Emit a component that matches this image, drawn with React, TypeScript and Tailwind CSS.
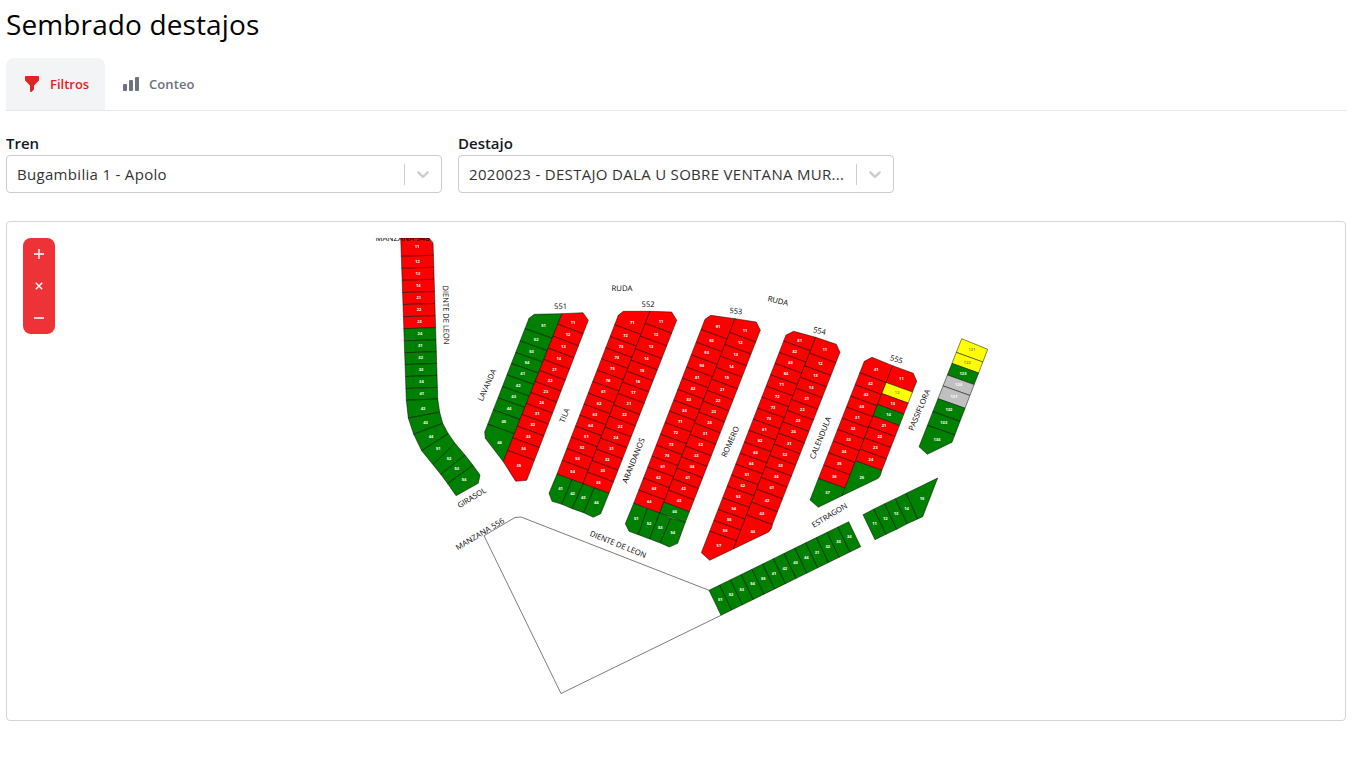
import React from "react";

type Pt = [number, number];
type Fill = "red" | "green" | "yellow" | "silver";
type Lot = { pts: Pt[]; fill: Fill; label: string; at?: Pt };

const R: Fill = "red";
const G: Fill = "green";
const Y: Fill = "yellow";
const S: Fill = "silver";

const xAt = ([a, b]: [Pt, Pt], y: number) =>
  a[0] + ((b[0] - a[0]) * (y - a[1])) / (b[1] - a[1]);

type Strip = {
  left: [Pt, Pt];
  right: [Pt, Pt];
  top: Pt[];
  bottom: Pt[];
  cuts: number[];
  labels: string;
  fills: (i: number) => Fill;
  drop?: number;
};

// Slices a slanted column of lots at the given heights; `top` runs left to right, `bottom` right to left.
function slice({ left, right, top, bottom, cuts, labels, fills, drop = 4.8 }: Strip): Lot[] {
  const names = labels.split(" ");
  const l = (c: number): Pt => [xAt(left, c - drop), c - drop];
  const r = (c: number): Pt => [xAt(right, c + drop), c + drop];
  return names.map((label, i) => {
    const head: Pt[] = i === 0 ? top : [l(cuts[i - 1]), r(cuts[i - 1])];
    const tail: Pt[] = i === names.length - 1 ? bottom : [r(cuts[i]), l(cuts[i])];
    return { pts: [...head, ...tail], fill: fills(i), label };
  });
}

// Builds lots between consecutive pairs of edge points.
function ladder(rungs: [Pt, Pt][], labels: string, fills: (i: number) => Fill): Lot[] {
  return labels.split(" ").map((label, i) => ({
    pts: [rungs[i][0], rungs[i][1], rungs[i + 1][1], rungs[i + 1][0]],
    fill: fills(i),
    label,
  }));
}

const westY = [256.3, 268.3, 280.3, 292.5, 304.5, 316.7, 328.7, 340.8, 352.7, 364.5, 376.5, 388.5];
const westRungs: [Pt, Pt][] = westY.map((y) => [
  [400.7 + (y - 238) * 0.0345, y],
  [433 + (y - 242) * 0.03, y - 1],
]);

const west: Lot[] = [
  {
    pts: [[400.7, 238], [429, 238], [433, 242.7], westRungs[0][1], westRungs[0][0]],
    fill: R,
    label: "11",
    at: [417, 246.9],
  },
  ...ladder(
    [
      ...westRungs,
      [[406.3, 400.3], [437.7, 399]],
      [[408.3, 418], [439.7, 412.3]],
      [[413.7, 434.3], [442.7, 423.3]],
      [[421.7, 450.7], [448.3, 433.7]],
      [[433, 464.7], [455, 443.3]],
      [[440.7, 474.3], [465, 455]],
      [[447.7, 483.7], [473, 465.3]],
    ],
    "12 13 14 21 22 23 24 31 32 33 34 41 42 43 44 51 52 53",
    (i) => (i < 6 ? R : G)
  ),
  { pts: [[447.7, 483.7], [473, 465.3], [480, 475], [478.3, 483.3], [456, 495.7]], fill: G, label: "54", at: [464, 479.5] },
];

const b551: Lot[] = [
  ...slice({
    left: [[529, 318.3], [484.7, 432]],
    right: [[562, 313.7], [503.3, 461.7]],
    top: [[529, 318.3], [534.3, 314.3], [562, 313.7]],
    bottom: [[503.3, 461.7], [485.3, 438.3], [484.7, 432]],
    cuts: [333.5, 345.8, 357.3, 368.3, 379.7, 391.3, 402.7, 414.7, 429],
    labels: "51 52 53 54 41 42 43 44 45 46",
    fills: () => G,
  }),
  ...slice({
    left: [[562, 313.7], [503.3, 461.7]],
    right: [[588.3, 320.3], [526.7, 480.3]],
    top: [[562, 313.7], [583, 312.7], [588.3, 320.3]],
    bottom: [[526.7, 480.3], [515.7, 481.3], [503.3, 461.7]],
    cuts: [329, 341, 353, 364.3, 375.3, 386.3, 397.3, 408.3, 419.3, 431, 442.7, 455.3],
    labels: "11 12 13 14 21 22 23 24 31 32 33 34 35",
    fills: () => R,
  }),
];

const b552: Lot[] = [
  ...slice({
    left: [[618.3, 315.3], [557, 474]],
    right: [[650, 311.3], [583, 483.7]],
    top: [[618.3, 315.3], [623.3, 311.3], [650, 311.3]],
    bottom: [[583, 483.7], [557, 474]],
    cuts: [329.7, 341.3, 352.7, 363.7, 375, 386.3, 398, 409, 420, 431, 442, 453.3, 465.3],
    labels: "71 72 73 74 75 76 61 62 63 64 51 52 53 54",
    fills: () => R,
  }),
  ...slice({
    left: [[650, 311.3], [583, 483.7]],
    right: [[676.7, 320.3], [609, 493.3]],
    top: [[650, 311.3], [671.7, 312], [676.7, 320.3]],
    bottom: [[609, 493.3], [583, 483.7]],
    cuts: [328.3, 341, 353.7, 365, 376, 387, 398.3, 409.7, 421, 432, 443, 454, 465.3, 477],
    labels: "11 12 13 14 15 16 17 21 22 23 24 31 32 33 34",
    fills: () => R,
  }),
  { pts: [[557, 474], [572, 479.7], [562, 504.3], [552, 501.3], [549, 493.3]], fill: G, label: "41" },
  { pts: [[572, 479.7], [583, 483.7], [572.3, 508.7], [562, 504.3]], fill: G, label: "42" },
  { pts: [[583, 483.7], [594.3, 488], [583.7, 512.7], [572.3, 508.7]], fill: G, label: "43" },
  { pts: [[594.3, 488], [609, 493.3], [600.7, 513.7], [593.3, 517.3], [583.7, 512.7]], fill: G, label: "44" },
];

const b553: Lot[] = [
  ...slice({
    left: [[705, 319.3], [633.7, 503.3]],
    right: [[735, 318.7], [659.7, 513]],
    top: [[705, 319.3], [710.7, 315.3], [735, 318.7]],
    bottom: [[659.7, 513], [633.7, 503.3]],
    cuts: [334.3, 347, 359.7, 372, 383, 394.3, 405, 416, 427.3, 439, 450, 461, 472, 483, 495],
    labels: "91 92 93 94 81 82 83 84 71 72 73 74 61 62 63 64",
    fills: () => R,
  }),
  ...slice({
    left: [[735, 318.7], [659.7, 513]],
    right: [[760.3, 330.3], [685.3, 522.3]],
    top: [[735, 318.7], [756.3, 322], [760.3, 330.3]],
    bottom: [[685.3, 522.3], [659.7, 513]],
    cuts: [337.3, 349.3, 361, 372.3, 384, 395.3, 406, 417, 428, 439.3, 451, 461.7, 473, 483.7, 495, 507],
    labels: "11 12 13 14 15 21 22 23 24 31 32 33 34 41 42 43 44",
    fills: (i) => (i === 16 ? G : R),
  }),
  { pts: [[633.7, 503.3], [647.3, 508.7], [638.3, 534.7], [629, 531.3], [625.3, 523.7]], fill: G, label: "51" },
  { pts: [[647.3, 508.7], [659.7, 513], [649.7, 539], [638.3, 534.7]], fill: G, label: "52" },
  { pts: [[659.7, 513], [671, 518], [660.3, 543], [649.7, 539]], fill: G, label: "53" },
  { pts: [[671, 518], [685.3, 522.3], [677.7, 543.3], [669.3, 547], [660.3, 543]], fill: G, label: "54" },
];

const b554: Lot[] = [
  ...slice({
    left: [[786, 335], [701.3, 552.7]],
    right: [[815.7, 337.3], [733.3, 549]],
    top: [[786, 335], [793.7, 331.3], [815.7, 337.3]],
    bottom: [[733.3, 549], [709.7, 560.3], [701.3, 552.7]],
    cuts: [346, 357.3, 368.3, 379.7, 391, 402, 413, 424, 435.3, 447, 458, 469, 480, 491, 502.7, 514.3, 525.3, 536],
    labels: "81 82 83 84 71 72 73 74 61 62 63 64 51 52 53 54 55 56 57",
    fills: () => R,
  }),
  ...slice({
    left: [[815.7, 337.3], [733.3, 549]],
    right: [[840, 352.3], [772, 525.5]],
    top: [[815.7, 337.3], [836.3, 344.3], [840, 352.3]],
    bottom: [[771.7, 528], [768.7, 532], [733.3, 549]],
    cuts: [358, 370.7, 382, 393, 404.3, 415.3, 426.7, 438, 449, 460.3, 471.3, 482.3, 494, 507, 519.8],
    labels: "11 12 13 14 21 22 23 24 31 32 33 34 41 42 43 44",
    fills: () => R,
  }),
];

const b555: Lot[] = [
  ...slice({
    left: [[864.3, 361.3], [810, 500]],
    right: [[892.7, 365.7], [842, 495.7]],
    top: [[864.3, 361.3], [872, 357.3], [892.7, 365.7]],
    bottom: [[842, 495.7], [818.3, 507.3], [810, 500]],
    cuts: [377.7, 389.7, 401, 412, 423, 434.3, 446, 457.7, 470, 483.3],
    labels: "41 42 43 44 31 32 33 34 35 36 37",
    fills: (i) => (i === 10 ? G : R),
  }),
  ...slice({
    left: [[892.7, 365.7], [842, 495.7]],
    right: [[916.7, 381.3], [881.7, 470.7]],
    top: [[892.7, 365.7], [913.3, 373.3], [916.7, 381.3]],
    bottom: [[880.3, 475.5], [878.3, 478.3], [842, 495.7]],
    cuts: [387.3, 398.3, 409.3, 420.7, 431.7, 442.7, 454, 465.7],
    labels: "11 12 13 14 21 22 23 24 25",
    fills: (i) => (i === 1 ? Y : i === 3 || i === 8 ? G : R),
  }),
];

const east: Lot[] = slice({
  left: [[961.7, 338.7], [919, 446.7]],
  right: [[987.7, 349.3], [952, 442.3]],
  top: [[961.7, 338.7], [987.7, 349.3]],
  bottom: [[952, 442.3], [927.3, 454.3], [919, 446.7]],
  cuts: [357.2, 368.2, 379.8, 390.7, 403.5, 416.5, 430.2],
  labels: "121 122 123 124 131 132 133 134",
  fills: (i) => (i < 2 ? Y : i === 3 || i === 4 ? S : G),
});

const southRungs = Array.from({ length: 14 }, (_, i): [Pt, Pt] => [
  [709 + (139.7 * i) / 13, 590.3 - (68.6 * i) / 13],
  [721 + (139.7 * i) / 13, 615.3 - (68.6 * i) / 13],
]);
const south: Lot[] = [
  ...ladder(southRungs, "51 52 53 54 55 41 42 43 44 31 32 33 34", () => G),
  ...ladder(
    [
      [[863, 514.7], [875, 539.7]],
      [[874, 509], [886, 534.3]],
      [[884.7, 503.7], [896.7, 529.3]],
      [[895.3, 498.7], [907.3, 523.7]],
      [[906.3, 493.3], [917.7, 519]],
    ],
    "11 12 13 14",
    () => G
  ),
  { pts: [[906.3, 493.3], [937.7, 478], [922.7, 516.7], [917.7, 519]], fill: G, label: "15" },
];

const lots = [...west, ...b551, ...b552, ...b553, ...b554, ...b555, ...east, ...south];

// Middle of the lot's bounding box.
function center(pts: Pt[]): Pt {
  const xs = pts.map((p) => p[0]);
  const ys = pts.map((p) => p[1]);
  return [
    (Math.min(...xs) + Math.max(...xs)) / 2,
    (Math.min(...ys) + Math.max(...ys)) / 2,
  ];
}

// text, centre x, centre y, rotation, length
const streets: [string, number, number, number, number][] = [
  ["MANZANA 548", 402.5, 238, 0, 54],
  ["DIENTE DE LEON", 446, 315, 89, 59],
  ["GIRASOL", 471.7, 497.7, -31, 32],
  ["MANZANA 556", 480, 534, -31, 55],
  ["LAVANDA", 487, 385, -66, 34],
  ["551", 560.5, 306.2, 0, 12.8],
  ["TILA", 564.5, 415.5, -68, 14.5],
  ["RUDA", 622, 288, 0, 21],
  ["552", 648, 304, 0, 12.8],
  ["ARANDANOS", 633.5, 460.5, -68, 48],
  ["553", 736, 311, 6, 12.8],
  ["RUDA", 778, 300.8, 13, 21],
  ["ROMERO", 730.3, 441.7, -66, 33],
  ["554", 819.5, 330.8, 12, 12.8],
  ["CALENDULA", 820.5, 437.8, -68, 45],
  ["555", 896.5, 359.3, 17, 12.8],
  ["PASSIFLORA", 919.3, 410, -67, 44],
  ["ESTRAGON", 829.5, 515.3, -31, 40],
  ["DIENTE DE LEON", 618, 544.3, 22, 60],
];

function SiteMap() {
  return (
    <svg
      className="block h-[466px] w-[1306px] font-['Open_Sans','Noto_Sans',sans-serif]"
      viewBox="23 238 1306 466"
      textRendering="geometricPrecision"
    >
      <path
        d="M709 590.3 L521 517 L515 517.5 L484 535.7 L561 693.5 L721 615.3"
        fill="none"
        stroke="#000"
        strokeOpacity="0.55"
        strokeWidth="0.95"
      />
      {lots.map(({ pts, fill }, i) => (
        <polygon
          key={i}
          points={pts.map((p) => p.join(",")).join(" ")}
          fill={fill}
          stroke="#000"
          strokeOpacity="0.75"
          strokeWidth="0.65"
          strokeLinejoin="round"
        />
      ))}
      {lots.map(({ pts, at, fill, label }, i) => {
        const [x, y] = at ?? center(pts);
        return (
          <text
            key={i}
            x={x}
            y={y + 1.1}
            fontSize="4.1"
            fontWeight={fill === Y ? 400 : 700}
            fill={fill === Y ? "#333" : "#fff"}
            textAnchor="middle"
          >
            {label}
          </text>
        );
      })}
      {streets.map(([text, x, y, turn, length], i) => (
        <text
          key={i}
          transform={`translate(${x} ${y}) rotate(${turn})`}
          y="2.7"
          fontSize="7.7"
          fill="#000"
          textAnchor="middle"
          textLength={length}
          lengthAdjust="spacingAndGlyphs"
        >
          {text}
        </text>
      ))}
    </svg>
  );
}

function Select({ label, value }: { label: string; value: string }) {
  return (
    <div className="w-[436px]">
      <div className="flex h-6 items-center text-[15px] font-semibold text-[#111827]">
        {label}
      </div>
      <div className="flex h-[38px] items-center rounded border border-[#cccccc] bg-white">
        <div className="min-w-0 flex-1 whitespace-nowrap pl-2.5 text-[15px] tracking-[0.31px] text-[#333333]">{value}</div>
        <div className="h-[21px] w-px bg-[#cccccc]" />
        <div className="p-2 text-[#cccccc]">
          <svg className="h-5 w-5" viewBox="0 0 20 20" fill="currentColor">
            <path d="M4.516 7.548c0.436-0.446 1.043-0.481 1.576 0l3.908 3.747 3.908-3.747c0.533-0.481 1.141-0.446 1.574 0 0.436 0.445 0.408 1.197 0 1.615-0.406 0.418-4.695 4.502-4.695 4.502-0.217 0.223-0.502 0.335-0.787 0.335s-0.57-0.112-0.789-0.335c0 0-4.287-4.084-4.695-4.502s-0.436-1.17 0-1.615z" />
          </svg>
        </div>
      </div>
    </div>
  );
}

export default function App() {
  return (
    <main className="h-[776px] overflow-hidden bg-white px-1.5 font-['Open_Sans','Noto_Sans',sans-serif] text-black">
      <h1 className="pt-1 pb-0.5 text-[28px] leading-[40px] tracking-[0.12px]">Sembrado destajos</h1>

      <nav className="mt-3 mr-[3px] flex h-[53px] border-b border-gray-200 text-[13px] font-semibold">
        <button className="flex h-[52px] w-[99px] items-center rounded-t-lg bg-gray-100 pl-4 text-[#e02424]">
          <svg className="mr-2 h-5 w-5" viewBox="0 0 20 20" fill="currentColor">
            <path
              fillRule="evenodd"
              clipRule="evenodd"
              d="M3 3a1 1 0 011-1h12a1 1 0 011 1v3a1 1 0 01-.293.707L12 11.414V15a1 1 0 01-.293.707l-2 2A1 1 0 018 17v-5.586L3.293 6.707A1 1 0 013 6V3z"
            />
          </svg>
          <span className="pt-0.5">Filtros</span>
        </button>
        <button className="flex h-[52px] items-center pl-4 text-[#6b7280]">
          <svg className="mr-2 h-5 w-5" viewBox="0 0 20 20" fill="currentColor">
            <path d="M2 11a1 1 0 011-1h2a1 1 0 011 1v5a1 1 0 01-1 1H3a1 1 0 01-1-1v-5zM8 7a1 1 0 011-1h2a1 1 0 011 1v9a1 1 0 01-1 1H9a1 1 0 01-1-1V7zM14 4a1 1 0 011-1h2a1 1 0 011 1v12a1 1 0 01-1 1h-2a1 1 0 01-1-1V4z" />
          </svg>
          <span className="pt-0.5 tracking-[0.1px]">Conteo</span>
        </button>
      </nav>

      <div className="mt-5 flex gap-4">
        <Select label="Tren" value="Bugambilia 1 - Apolo" />
        <Select label="Destajo" value="2020023 - DESTAJO DALA U SOBRE VENTANA MUR..." />
      </div>

      <section className="relative mt-7 mr-[3px] h-[500px] rounded border border-gray-300 p-4">
        <SiteMap />
        <div className="absolute top-4 left-4 flex h-24 w-8 flex-col overflow-hidden rounded-lg bg-[#ee3338]">
          {["M11 16H21M16 11V21", "M12.8 12.8L19.2 19.2M19.2 12.8L12.8 19.2", "M11 16H21"].map((d, i) => (
            <button key={i} className="h-8 w-8">
              <svg className="block h-8 w-8" viewBox="0 0 32 32" fill="none" stroke="#fff" strokeWidth="1.4">
                <path d={d} />
              </svg>
            </button>
          ))}
        </div>
      </section>
    </main>
  );
}
